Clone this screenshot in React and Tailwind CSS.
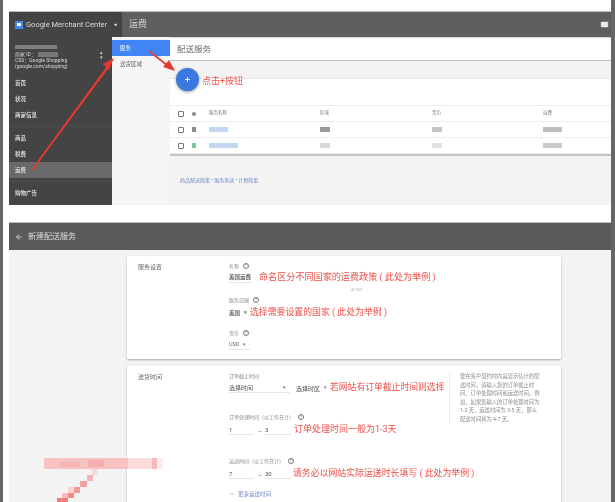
import React from "react";
import { ArrowLeft, ChevronDown, Mail, Plus } from "lucide-react";

const cjk = "font-['Roboto','Noto_Sans_CJK_SC',sans-serif]";

const navTop = ["首页", "状况", "商家信息"];
const navMid = ["商品", "税费"];
const hint = [
    "要在客户契约时向其显示估计的配",
    "送时间，请输入您的订单截止时",
    "间、订单处理时间和运送时间。例",
    "如，如果您输入的订单处理时间为",
    "1-2 天，运送时间为 3-5 天，那么",
    "配送时间将为 4-7 天。",
];

const Help = () => (
    <span className="ml-1 inline-flex h-[6px] w-[6px] items-center justify-center rounded-full border border-[#777] text-[4px] leading-none text-[#777]">?</span>
);

const Label = ({ children, help = true }) => (
    <div className="flex h-[8px] items-center text-[5px] leading-none text-[#8a8a8a]">
        {children}
        {help && <Help />}
    </div>
);

const Note = ({ children, className = "" }) => (
    <span className={`shrink-0 whitespace-nowrap text-[#ee5049] ${className}`}>{children}</span>
);

const Caret = () => <span className="ml-1 text-[5px] text-[#777]">▾</span>;

const Side = () => (
    <aside className="flex w-[103px] shrink-0 flex-col bg-[#444444] text-[#d8d8d8]">
        <div className="relative h-[38px] shrink-0 pl-[6px] pt-[8px] text-[5px] leading-[6px]">
            <div className="mb-[2px] h-[4px] w-[42px] bg-[#8f8f8f] opacity-80" />
            <div className="flex items-center">商家 ID：<span className="ml-[2px] h-[5px] w-[20px] bg-[#777]" /></div>
            <div>CSS：Google Shopping</div>
            <div>(google.com/shopping)</div>
            <div className="absolute right-[9px] top-[13px] text-[5px] leading-[5px]">
                <div>▴</div>
                <div>▾</div>
            </div>
        </div>
        <div className="flex shrink-0 flex-col">
            {navTop.map((item) => (
                <div key={item} className="flex h-[16px] items-center pl-[6px] text-[5.5px] font-bold">{item}</div>
            ))}
        </div>
        <div className="mt-[3px] flex shrink-0 flex-col border-t border-[#4d4d4d] pt-[3px]">
            {navMid.map((item) => (
                <div key={item} className="flex h-[16px] items-center pl-[6px] text-[5.5px] font-bold">{item}</div>
            ))}
            <div className="flex h-[16px] items-center bg-[#696969] pl-[6px] text-[5.5px] font-bold">运费</div>
        </div>
        <div className="mt-[3px] shrink-0 border-t border-[#4d4d4d] pt-[3px]">
            <div className="flex h-[16px] items-center pl-[6px] text-[5.5px] font-bold">购物广告</div>
        </div>
    </aside>
);

const Row = ({ dot, name, zone, cur, fee }) => (
    <div className="grid h-[16px] grid-cols-[14px_17px_111px_112px_111px_1fr] items-center border-b border-[#eeeeee] pl-[8px]">
        <span className="h-[6px] w-[6px] rounded-[1px] border border-[#777]" />
        <span className={`h-[5px] w-[4px] ${dot}`} />
        <span className={`h-[5px] ${name} bg-[#c3d7f5]`} />
        <span className={`h-[5px] w-[10px] ${zone}`} />
        <span className={`h-[5px] w-[10px] ${cur}`} />
        <span className={`h-[5px] w-[19px] ${fee}`} />
    </div>
);

const ShippingList = () => (
    <section className="flex h-[194px] shrink-0 flex-col">
        <header className="flex h-[26px] shrink-0 items-center justify-between border-t border-[#bdbdbd] bg-[#5f5f5f]">
            <div className="flex h-full w-[113px] items-center bg-[#444444] pl-[6px]">
                <span className="flex h-[8px] w-[8px] items-center justify-center bg-[#4285f4]">
                    <span className="h-[3px] w-[4px] bg-white" />
                </span>
                <span className="ml-[3px] whitespace-nowrap text-[7.5px] text-[#d9d9d9]">Google Merchant Center</span>
                <span className="ml-[7px] text-[5px] text-white">◂</span>
            </div>
            <span className="ml-[7px] mr-auto text-[9px] text-[#d4d4d4]">运费</span>
            <Mail className="mr-[2px] h-[9px] w-[9px] text-[#5f5f5f]" fill="#efefef" strokeWidth={1.5} />
        </header>
        <div className="flex min-h-0 flex-1">
            <Side />
            <nav className="w-[58px] shrink-0 bg-[#f5f5f5] pt-[3px] text-[5.5px]">
                <div className="flex h-[16px] items-center bg-[#4285f4] pl-[8px] text-white">服务</div>
                <div className="flex h-[16px] items-center pl-[8px] text-[#666]">送货区域</div>
            </nav>
            <div className="flex min-w-0 flex-1 flex-col border-t border-[#d5d5d5] bg-[#f3f3f3]">
                <div className="flex h-[23px] shrink-0 items-center border-b border-[#bdbdbd] bg-white pl-[7px] text-[8.5px] text-[#6b6b6b]">配送服务</div>
                <div className="h-[18px] shrink-0 border-b border-[#e5e5e5]" />
                <div className="shrink-0 border-b-2 border-[#c4c4c4] bg-white">
                    <div className="h-[27px] border-b border-[#eeeeee]" />
                    <div className="grid h-[16px] grid-cols-[14px_17px_111px_112px_111px_1fr] items-center border-b border-[#eeeeee] pl-[8px] text-[4.5px] text-[#777]">
                        <span className="h-[6px] w-[6px] rounded-[1px] border border-[#777]" />
                        <span className="h-[4px] w-[4px] rounded-full bg-[#8a8a8a]" />
                        <span>服务名称</span>
                        <span>区域</span>
                        <span>货币</span>
                        <span>运费</span>
                    </div>
                    <Row dot="bg-[#8c8c8c]" name="w-[19px]" zone="bg-[#9a9a9a]" cur="bg-[#c4c4c4]" fee="bg-[#bdbdbd]" />
                    <Row dot="bg-[#78c798]" name="w-[29px]" zone="bg-[#d8d8d8]" cur="bg-[#e2e2e2]" fee="bg-[#c9c9c9]" />
                </div>
                <div className="pl-[10px] pt-[21px] text-[5px] text-[#6f88c0]">商品配送政策 • 服务条款 • 计划政策</div>
            </div>
        </div>
    </section>
);

const Card = ({ title, className = "", children }) => (
    <div className={`flex w-[434px] bg-white shadow-[0_1px_2px_rgba(0,0,0,0.3)] ${className}`}>
        <div className="w-[102px] shrink-0 pl-[11px] text-[6px] text-[#666]">{title}</div>
        {children}
    </div>
);

const NewService = () => (
    <section className="flex min-h-0 flex-1 flex-col">
        <header className="flex h-[28px] shrink-0 items-center border-t border-[#bdbdbd] bg-[#5a5a5a] pl-[6px] text-[#dddddd]">
            <ArrowLeft className="h-[8px] w-[8px]" strokeWidth={2.5} />
            <span className="ml-[5px] text-[8px]">新建配送服务</span>
        </header>
        <div className="flex min-h-0 flex-1 flex-col gap-[7px] bg-[#f3f3f3] pl-[118px] pt-[6px]">
            <Card title="服务设置" className="h-[103px] shrink-0 pt-[6px]">
                <div className="text-[6px] text-[#555]">
                    <Label>名称</Label>
                    <div className="mt-[2px] flex h-[12px] items-center">
                        <span className="mr-[6px] w-[24px] shrink-0 border-b border-[#e6e6e6] text-[5.5px] font-bold text-[#666]">美国运费</span>
                        <Note className="text-[9.1px]">命名区分不同国家的运费政策 ( 此处为举例 )</Note>
                    </div>
                    <div className="h-[10px] pl-[122px] pt-[4px] text-[4px] leading-[4px] text-[#aaa]">4/100</div>
                    <div className="mt-[2px]"><Label>服务范围</Label></div>
                    <div className="mt-[3px] flex h-[12px] items-center">
                        <span className="flex w-[21px] shrink-0 items-center text-[5.5px] font-bold text-[#666]">美国<Caret /></span>
                        <Note className="text-[8.9px]">选择需要设置的国家 ( 此处为举例 )</Note>
                    </div>
                    <div className="mt-[10px]"><Label>货币</Label></div>
                    <div className="mt-[3px] flex h-[10px] w-[21px] items-center border-b border-[#e6e6e6] text-[5.5px] text-[#666]">USD<Caret /></div>
                </div>
            </Card>
            <Card title="送货时间" className="min-h-0 flex-1 pt-[6px]">
                <div className="w-[220px] shrink-0 text-[6px] text-[#555]">
                    <Label help={false}>订单截止时间</Label>
                    <div className="mt-[1px] flex h-[14px] items-center">
                        <span className="flex w-[61px] shrink-0 items-center justify-between border-b border-[#e6e6e6] pr-[4px]">选择时间<Caret /></span>
                        <span className="ml-[6px] flex w-[34px] shrink-0 items-center whitespace-nowrap">选择时区<Caret /></span>
                        <Note className="text-[8.8px]">若网站有订单截止时间则选择</Note>
                    </div>
                    <div className="mt-[18px]"><Label>订单处理时间（以工作日计）</Label></div>
                    <div className="mt-[2px] flex h-[14px] items-center">
                        <span className="w-[25px] shrink-0 border-b border-[#e6e6e6]">1</span>
                        <span className="w-[11px] shrink-0 pl-[4px]">–</span>
                        <span className="w-[27px] shrink-0 border-b border-[#e6e6e6]">3</span>
                        <Note className="ml-[2px] text-[9px]">订单处理时间一般为1-3天</Note>
                    </div>
                    <div className="mt-[20px]"><Label>运送时间（以工作日计）</Label></div>
                    <div className="mt-[2px] flex h-[14px] items-center">
                        <span className="w-[25px] shrink-0 border-b border-[#e6e6e6]">7</span>
                        <span className="w-[11px] shrink-0 pl-[4px]">–</span>
                        <span className="w-[27px] shrink-0 border-b border-[#e6e6e6]">30</span>
                        <Note className="ml-[1px] text-[8.9px]">请务必以网站实际运送时长填写 ( 此处为举例 )</Note>
                    </div>
                    <div className="mt-[9px] flex items-center text-[5.5px] text-[#6f88c0]">
                        <ChevronDown className="mr-[3px] h-[6px] w-[6px] text-[#666]" />
                        更多运送时间
                    </div>
                </div>
                <div className="h-[52px] w-[98px] border-l border-[#eeeeee] pl-[10px] text-[5.3px] leading-[8.5px] text-[#8a8a8a]">
                    {hint.map((line) => (
                        <div key={line} className="whitespace-nowrap">{line}</div>
                    ))}
                </div>
            </Card>
        </div>
    </section>
);

// 原图里打了马赛克的箭头
const mosaic = [
    [44, 458, 84, 11, "#f8c2c2"],
    [60, 462, 20, 5, "#f6b4b4"],
    [88, 460, 16, 7, "#f5aeae"],
    [128, 458, 24, 11, "#fbdcdc"],
    [152, 458, 5, 11, "#f6b8b8"],
    [157, 458, 6, 11, "#fdeaea"],
    [92, 469, 5, 6, "#fbd8d8"],
    [87, 475, 6, 6, "#f7b4b4"],
    [80, 481, 7, 6, "#f5a0a0"],
    [74, 487, 6, 6, "#f49a9a"],
    [68, 487, 6, 6, "#fbd5d5"],
    [68, 493, 6, 5, "#f28a8a"],
    [62, 493, 6, 5, "#f8bcbc"],
    [57, 498, 11, 4, "#f07c7c"],
];

const Overlay = () => (
    <svg className="pointer-events-none absolute left-0 top-0 h-[502px] w-[615px]" viewBox="0 0 615 502">
        <path d="M31 170 L107 66 L109 67.5 L33 170 Z" fill="#e8392d" />
        <path d="M114 58 L103 64 L109 70 Z" fill="#e8392d" />
        <path d="M149 51 L168 66" stroke="#e8392d" strokeWidth="1.6" fill="none" />
        <path d="M175 71 L163 67 L169 60 Z" fill="#e8392d" />
        {mosaic.map(([x, y, w, h, fill], i) => (
            <rect key={i} x={x} y={y} width={w} height={h} fill={fill} />
        ))}
    </svg>
);

const App = () => {
    return (
        <div className={`relative flex h-[502px] w-[615px] overflow-hidden bg-white blur-[0.5px] ${cjk}`}>
            <div className="w-[3px] shrink-0 bg-[#666666]" />
            <div className="flex min-w-0 flex-1 flex-col pl-[6px] pt-[11px]">
                <ShippingList />
                <div className="h-[17px] shrink-0" />
                <NewService />
            </div>
            <div className="w-[4px] shrink-0 bg-[#666666]" />
            <Overlay />
            <button className="absolute left-[176px] top-[68px] flex h-[23px] w-[23px] items-center justify-center rounded-full bg-[#3b78e0] text-white shadow-[0_1px_3px_rgba(0,0,0,0.4)]">
                <Plus className="h-[7px] w-[7px]" strokeWidth={3} />
            </button>
            <span className="absolute left-[202px] top-[74px] text-[9px] leading-[14px] text-[#ee5049]">点击+按钮</span>
        </div>
    );
};

export default App;
